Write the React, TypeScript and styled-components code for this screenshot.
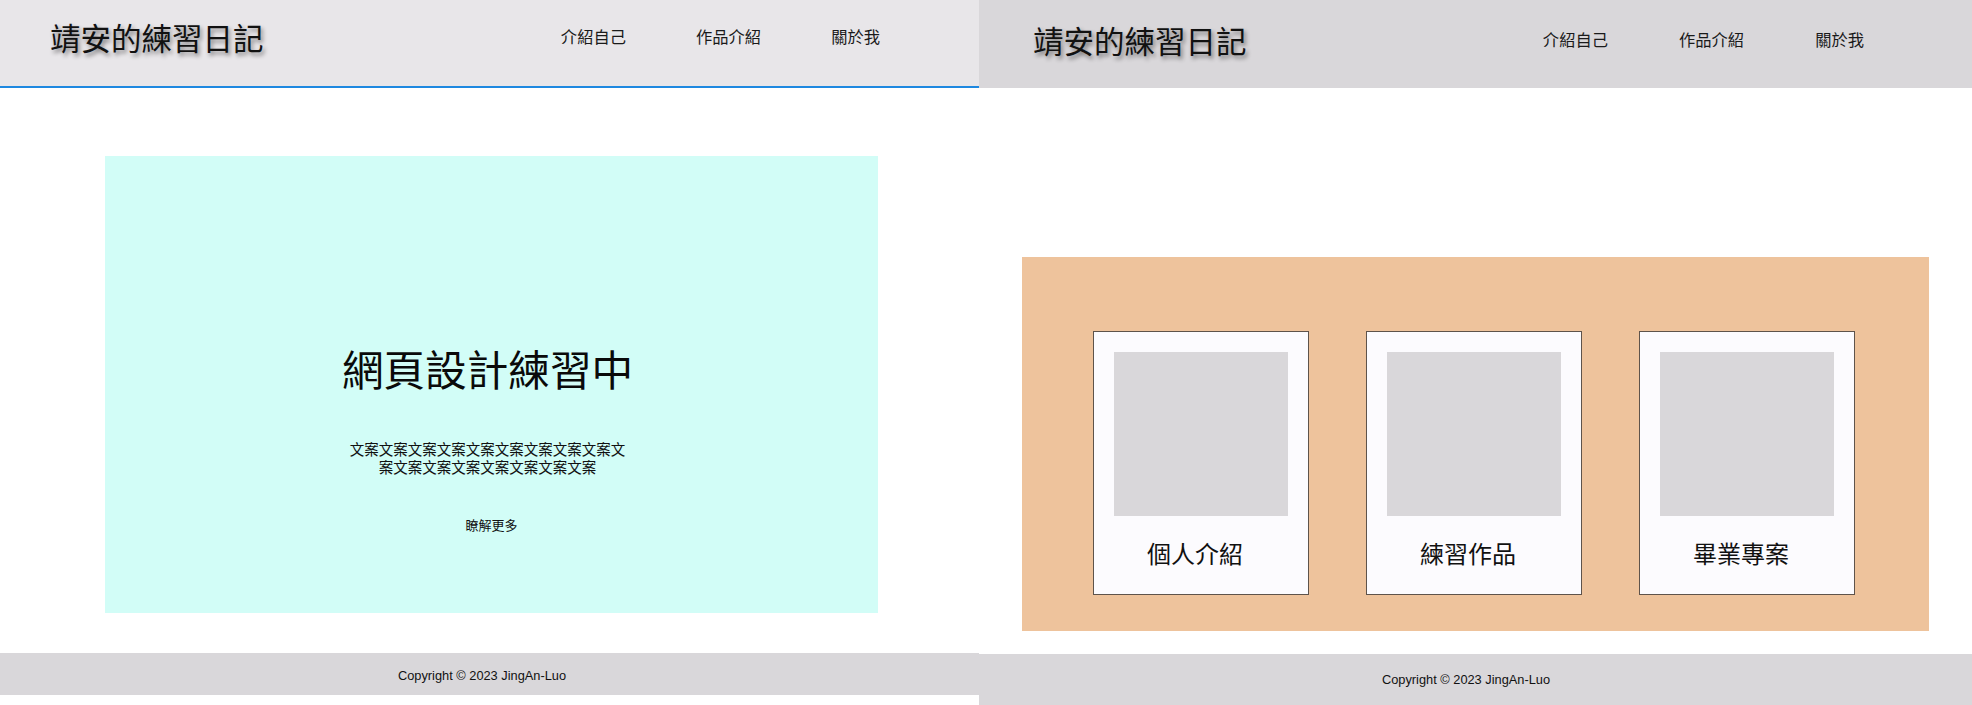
import React from "react";
import styled, { createGlobalStyle } from "styled-components";

const GlobalStyle = createGlobalStyle`
  * { box-sizing: border-box; }
  html, body { margin: 0; padding: 0; background: #ffffff; }
  body {
    font-family: Inter, "Noto Sans CJK TC", "Noto Sans", sans-serif;
    color: #111111;
    width: 1972px;
    height: 705px;
    overflow: hidden;
  }
  h1, h2, p { margin: 0; }
`;

const Stage = styled.div`
  display: flex;
  width: 1972px;
  height: 705px;
  background: #ffffff;
`;

const Panel = styled.section<{ $width: number }>`
  display: flex;
  flex-direction: column;
  width: ${(p) => p.$width}px;
  flex: none;
  height: 705px;
  overflow: hidden;
  background: #ffffff;
`;

const Header = styled.header<{
  $bg: string;
  $height: number;
  $border?: boolean;
  $padLeft: number;
  $padRight: number;
  $padTop: number;
  $navTop: number;
}>`
  display: flex;
  align-items: flex-start;
  height: ${(p) => p.$height}px;
  flex: none;
  background: ${(p) => p.$bg};
  border-bottom: ${(p) => (p.$border ? "2px solid #1e88e0" : "none")};
  padding-left: ${(p) => p.$padLeft}px;
  padding-right: ${(p) => p.$padRight}px;

  & > h1 {
    margin-top: ${(p) => p.$padTop}px;
  }
  & > nav {
    margin-top: ${(p) => p.$navTop}px;
  }
`;

const SiteTitle = styled.h1`
  font-family: "Noto Sans CJK TC", sans-serif;
  font-weight: 400;
  font-size: 30.5px;
  line-height: 36px;
  color: #111111;
  text-shadow: 2px 3px 4px rgba(0, 0, 0, 0.45);
  white-space: nowrap;
`;

const Nav = styled.nav<{ $gap: number }>`
  display: flex;
  margin-left: auto;
  gap: ${(p) => p.$gap}px;
`;

const NavLink = styled.a`
  font-family: "Noto Sans CJK TC", sans-serif;
  font-size: 16.3px;
  line-height: 20px;
  color: #1a1a1a;
  text-decoration: none;
  white-space: nowrap;
`;

const Spacer = styled.div<{ $h: number }>`
  height: ${(p) => p.$h}px;
  flex: none;
`;

const Hero = styled.div`
  display: flex;
  flex-direction: column;
  align-items: center;
  margin-left: 105px;
  width: 773px;
  height: 457px;
  flex: none;
  background: #d2fdf7;
  padding-top: 188px;
  padding-right: 8px;
`;

const HeroTitle = styled.h2`
  font-family: "Noto Sans CJK TC", sans-serif;
  font-weight: 400;
  font-size: 41.6px;
  line-height: 48px;
  color: #0a0a0a;
  white-space: nowrap;
`;

const HeroText = styled.p`
  margin-top: 48px;
  width: 288px;
  font-family: "Noto Sans CJK TC", sans-serif;
  font-size: 14.5px;
  line-height: 17.5px;
  text-align: center;
  color: #111111;
`;

const MoreButton = styled.a`
  margin-top: 42px;
  padding-left: 8px;
  font-family: "Noto Sans CJK TC", sans-serif;
  font-size: 13px;
  line-height: 16px;
  color: #111111;
  text-decoration: none;
`;

const Showcase = styled.div`
  display: grid;
  grid-template-columns: 216px 216px 216px;
  column-gap: 57px;
  align-items: start;
  margin-left: 43px;
  width: 907px;
  height: 374px;
  flex: none;
  background: #eec39c;
  padding: 74px 0 0 71px;
`;

const Card = styled.div`
  display: flex;
  flex-direction: column;
  width: 216px;
  height: 264px;
  background: #fcfbfe;
  border: 1px solid #5e534b;
  padding: 20px 20px 0 20px;
`;

const CardImage = styled.div`
  width: 174px;
  height: 164px;
  background: #d9d7da;
`;

const CardLabel = styled.div`
  margin-top: 22px;
  padding-right: 12px;
  font-family: "Noto Sans CJK TC", sans-serif;
  font-size: 24px;
  line-height: 30px;
  text-align: center;
  color: #111111;
`;

const Footer = styled.footer<{ $h: number; $padRight: number; $padTop: number }>`
  display: flex;
  align-items: center;
  justify-content: center;
  height: ${(p) => p.$h}px;
  flex: none;
  background: #d9d7da;
  padding-right: ${(p) => p.$padRight}px;
  padding-top: ${(p) => p.$padTop}px;
  font-family: "Liberation Sans", Arial, sans-serif;
  font-size: 12.8px;
  line-height: 16px;
  color: #111111;
`;

const navItems = ["介紹自己", "作品介紹", "關於我"];
const cards = ["個人介紹", "練習作品", "畢業專案"];

export default function App() {
  return (
    <>
      <GlobalStyle />
      <Stage>
        <Panel $width={979}>
          <Header
            $bg="#e8e6e9"
            $height={88}
            $border
            $padLeft={50}
            $padRight={99}
            $padTop={19}
            $navTop={26}
          >
            <SiteTitle>靖安的練習日記</SiteTitle>
            <Nav $gap={70}>
              {navItems.map((n) => (
                <NavLink key={n} href="#">
                  {n}
                </NavLink>
              ))}
            </Nav>
          </Header>
          <Spacer $h={68} />
          <Hero>
            <HeroTitle>網頁設計練習中</HeroTitle>
            <HeroText>
              文案文案文案文案文案文案文案文案文案文案文案文案文案文案文案文案文案
            </HeroText>
            <MoreButton href="#">瞭解更多</MoreButton>
          </Hero>
          <Spacer $h={40} />
          <Footer $h={42} $padRight={15} $padTop={4}>
            Copyright © 2023 JingAn-Luo
          </Footer>
        </Panel>
        <Panel $width={993}>
          <Header
            $bg="#d9d7da"
            $height={88}
            $padLeft={54}
            $padRight={108}
            $padTop={22}
            $navTop={29}
          >
            <SiteTitle>靖安的練習日記</SiteTitle>
            <Nav $gap={71}>
              {navItems.map((n) => (
                <NavLink key={n} href="#">
                  {n}
                </NavLink>
              ))}
            </Nav>
          </Header>
          <Spacer $h={169} />
          <Showcase>
            {cards.map((c) => (
              <Card key={c}>
                <CardImage />
                <CardLabel>{c}</CardLabel>
              </Card>
            ))}
          </Showcase>
          <Spacer $h={23} />
          <Footer $h={51} $padRight={19} $padTop={0}>
            Copyright © 2023 JingAn-Luo
          </Footer>
        </Panel>
      </Stage>
    </>
  );
}
